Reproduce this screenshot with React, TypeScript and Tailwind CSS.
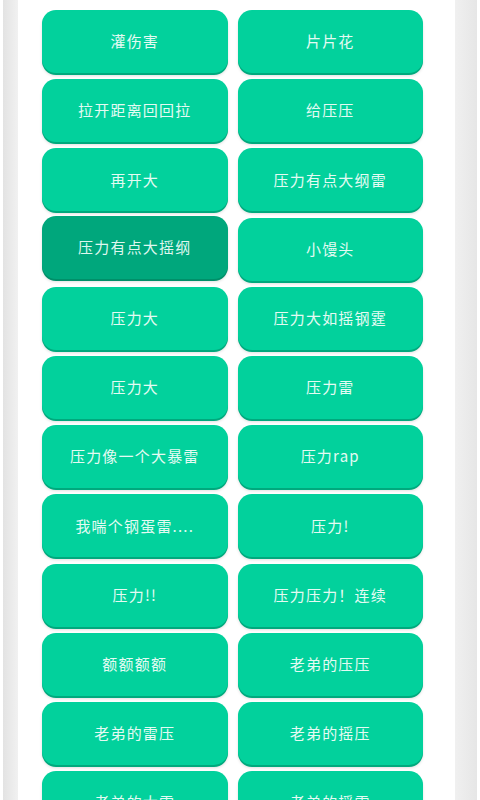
import React from "react";

const items: string[] = [
  "灌伤害", "片片花",
  "拉开距离回回拉", "给压压",
  "再开大", "压力有点大纲雷",
  "压力有点大摇纲", "小馒头",
  "压力大", "压力大如摇钢霆",
  "压力大", "压力雷",
  "压力像一个大暴雷", "压力rap",
  "我喘个钢蛋雷....", "压力!",
  "压力!!", "压力压力！连续",
  "额额额额", "老弟的压压",
  "老弟的雷压", "老弟的摇压",
  "老弟的大雷", "老弟的摇雷",
];

export default function App() {
  return (
    <div
      className="flex h-[800px] w-[480px] overflow-hidden bg-white"
      style={{ fontFamily: '"Noto Sans CJK SC", "Noto Sans", sans-serif' }}
    >
      <div className="w-[3px] shrink-0 bg-white" />
      <div className="w-[15px] shrink-0 bg-gradient-to-r from-[#e3e3e3] to-[#f1f1f1]" />
      <div className="flex-1 bg-white pl-[24px] pr-[32px] pt-[10px]">
        <div className="grid grid-cols-2 gap-x-[10px] gap-y-[6.2px]">
          {items.map((t, i) => {
            const active = i === 6;
            return (
              <div
                key={i}
                className={
                  active
                    ? "flex h-[63px] items-center justify-center rounded-[14px] bg-[#00a77c] text-[15px] tracking-[1.2px] text-[#dff7ef] shadow-[0_2px_0_#008f69,0_3px_3px_rgba(0,0,0,0.12)] -translate-y-[2px]"
                    : "flex h-[63px] items-center justify-center rounded-[14px] bg-[#02d19c] text-[15px] tracking-[1.2px] text-[#e4fbf3] shadow-[0_2px_0_#00a97d,0_3px_3px_rgba(0,0,0,0.12)]"
                }
              >
                {t}
              </div>
            );
          })}
        </div>
      </div>
      <div className="w-[22px] shrink-0 bg-gradient-to-r from-[#f0f0f0] to-[#e6e6e6]" />
      <div className="w-[3px] shrink-0 bg-white" />
    </div>
  );
}
